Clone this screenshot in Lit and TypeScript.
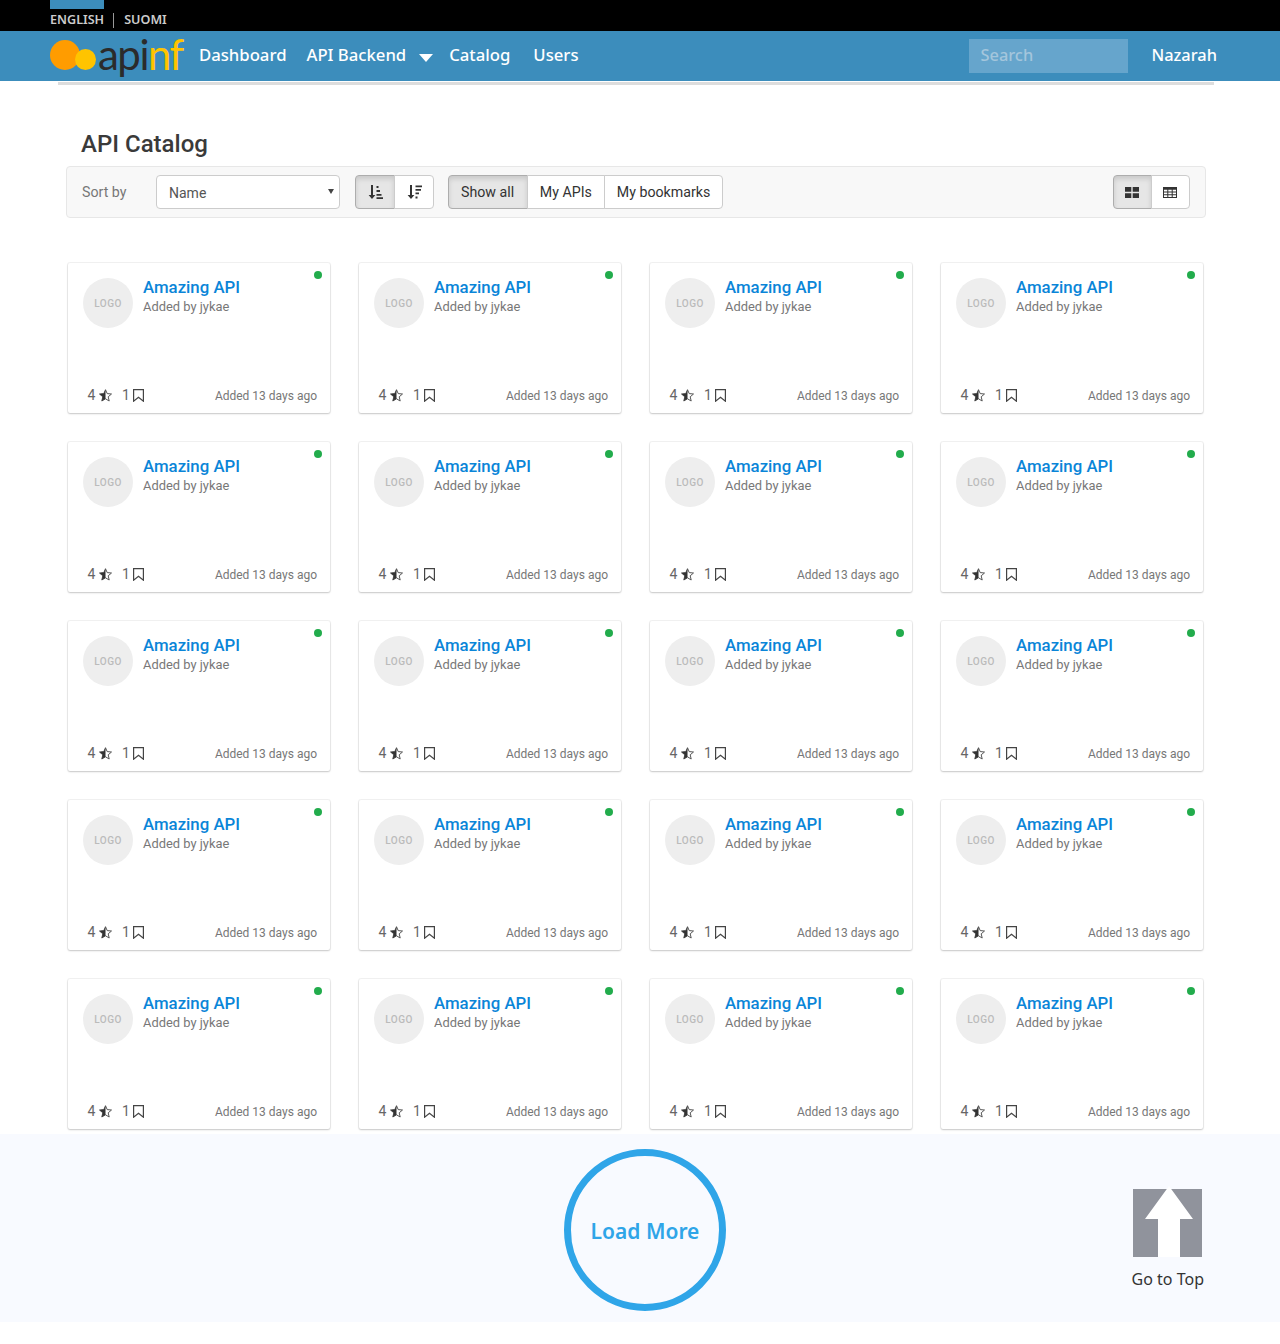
import { LitElement, html, css, svg } from 'lit';
import { customElement } from 'lit/decorators.js';

const sortAsc = html`<svg width="16" height="16" viewBox="0 0 16 16"><path d="M4 1h2v10h2.400L5 15 1.600 11H4z" fill="#333"/><path d="M9.500 2h2v2h-2zM9.500 6h3.500v2H9.500zM9.500 10h5v1.800h-5zM9.500 13.200h6.500V15H9.500z" fill="#333"/></svg>`;
const sortDesc = html`<svg width="16" height="16" viewBox="0 0 16 16"><path d="M4 1h2v10h2.400L5 15 1.600 11H4z" fill="#333"/><path d="M9.500 1.500H16v1.800H9.500zM9.500 5H15v1.800H9.500zM9.500 8.500h3.500v1.800H9.500zM9.500 12.500h2v2h-2z" fill="#333"/></svg>`;
const grid = html`<svg width="14" height="11" viewBox="0 0 14 12" preserveAspectRatio="none"><path d="M0 0h6.300v5.300H0zM7.700 0H14v5.300H7.700zM0 6.700h6.300V12H0zM7.700 6.700H14V12H7.700z" fill="#333"/></svg>`;
const table = html`<svg width="14" height="11" viewBox="0 0 14 12" preserveAspectRatio="none"><path d="M0 0h14v12H0z" fill="#333"/><path d="M1 3h3.300v2H1zM5.300 3h3.400v2H5.300zM9.700 3H13v2H9.700zM1 6h3.300v2H1zM5.300 6h3.400v2H5.300zM9.700 6H13v2H9.700zM1 9h3.300v2H1zM5.300 9h3.400v2H5.300zM9.700 9H13v2H9.700z" fill="#fff"/></svg>`;
const star = html`<svg width="13" height="13" viewBox="0.5 0.500 13 13"><path d="M7 1.200l1.700 3.900 4.300.4-3.300 2.800 1 4.200L7 10.300l-3.700 2.200 1-4.200L1 5.500l4.300-.4z" fill="#fff" stroke="#555" stroke-width="1"/><path d="M7 1.200v9.100l-3.700 2.200 1-4.200L1 5.500l4.300-.4z" fill="#333"/></svg>`;
const bookmark = html`<svg width="11" height="13" viewBox="0 0 11 13"><path d="M.6.600h9.800v11.600L5.500 8.300.6 12.200z" fill="none" stroke="#444" stroke-width="1.200"/></svg>`;
const arrow = svg`<path d="M0 3h69v68H0z" fill="#90939c"/><path d="M36 0l24 33H47v38H25V33H12z" fill="#fff"/>`;

@customElement('app-root')
export class AppRoot extends LitElement {
  static styles = css`
    :host {
      display: block;
      font-family: Roboto, sans-serif;
      color: #333;
      background: #fff;
    }
    .lang {
      height: 31px;
      background: #000;
      padding-left: 50px;
      box-sizing: border-box;
      font: 600 12.6px/1 "Noto Sans", sans-serif;
      color: #ccc;
    }
    .lang-inner {
      display: flex;
      flex-direction: column;
    }
    .lang-tab {
      width: 54px;
      height: 9px;
      background: #3c8dbc;
      margin-bottom: 4px;
    }
    .lang-row {
      display: flex;
      align-items: center;
      height: 14px;
    }
    .lang-row i {
      width: 1px;
      height: 15px;
      background: #999;
      margin: 0 10px 0 9px;
    }
    .nav {
      height: 50px;
      background: #3c8dbc;
      display: flex;
      align-items: center;
      padding-left: 50px;
      font: 500 16.4px "Noto Sans", sans-serif;
      color: #fff;
    }
    .logo {
      display: flex;
      align-items: center;
      width: 149px;
      position: relative;
    }
    .logo-text {
      font: 400 42px/50px Lato, sans-serif;
      letter-spacing: -1.5px;
      color: #2b2b2b;
      margin-left: 48px;
      margin-top: -4px;
    }
    .logo-text span { color: #ffc400; }
    .dot-a, .dot-b {
      position: absolute;
      border-radius: 50%;
    }
    .dot-a { left: 0; top: 7px; width: 30px; height: 30px; background: #ff9c00; }
    .dot-b { left: 25px; top: 16px; width: 21px; height: 21px; background: #ffc400; }
    .nav a { white-space: nowrap; padding-bottom: 4px; font-size: 16.7px; }
    .nav a.backend { margin-left: 20px; }
    .nav a.users { margin-left: 23px; }
    .caret {
      width: 0;
      height: 0;
      border-left: 7px solid transparent;
      border-right: 7px solid transparent;
      border-top: 8px solid #fff;
      margin: 4px 16px 0 13px;
    }
    .search {
      margin-left: auto;
      width: 159px;
      height: 34px;
      background: #66a5cc;
      color: #a4c6dc;
      line-height: 32px;
      padding-left: 11px;
      box-sizing: border-box;
    }
    .user {
      margin: 0 63px 0 23px;
      padding-bottom: 4px;
    }
    .rule {
      height: 3px;
      background: #ddd;
      margin: 1px 66px 0 58px;
    }
    h1 {
      font: 500 24px/28px Roboto, sans-serif;
      color: #3a3a3a;
      margin: 45px 0 8px 81px;
    }
    .toolbar {
      margin: 0 74px 0 66px;
      height: 52px;
      box-sizing: border-box;
      background: #f8f8f8;
      border: 1px solid #e7e7e7;
      border-radius: 4px;
      display: flex;
      align-items: center;
      padding: 0 15px;
      font-size: 14.2px;
    }
    .sort-label {
      color: #777;
      width: 74px;
    }
    .select {
      position: relative;
      margin-right: 15px;
    }
    .select::after {
      content: "";
      position: absolute;
      right: 6px;
      top: 14px;
      border-left: 3px solid transparent;
      border-right: 3px solid transparent;
      border-top: 5px solid #444;
    }
    select {
      display: block;
      appearance: none;
      width: 184px;
      height: 34px;
      border: 1px solid #ccc;
      border-radius: 4px;
      background: #fff;
      color: #555;
      font: 14px Roboto, sans-serif;
      padding: 2px 8px 0 12px;
    }
    .group { display: flex; }
    .group + .group { margin-left: 14px; }
    .group.end { margin-left: auto; }
    .btn {
      height: 34px;
      box-sizing: border-box;
      border: 1px solid #ccc;
      background: #fff;
      display: flex;
      align-items: center;
      justify-content: center;
      margin-left: -1px;
      color: #333;
    }
    .btn:first-child { border-radius: 4px 0 0 4px; margin-left: 0; }
    .btn:last-child { border-radius: 0 4px 4px 0; }
    .btn.on {
      background: #e6e6e6;
      border-color: #adadad;
      box-shadow: inset 0 3px 5px rgba(0, 0, 0, 0.125);
    }
    .btn.icon { width: 40px; }
    .end .btn.icon { width: 39px; padding-right: 1px; }
    .btn.text { padding: 0 12px; }
    .btn.text:first-child { padding-right: 12.7px; }
    .btn.text:last-child { padding-right: 11.5px; }
    .cards {
      display: grid;
      grid-template-columns: repeat(4, 262px);
      gap: 29px;
      padding: 45px 0 5px 68px;
    }
    .card {
      position: relative;
      height: 150px;
      box-sizing: border-box;
      background: #fff;
      border-radius: 2px;
      box-shadow: 0 1px 2px rgba(0, 0, 0, 0.18), 0 0 0 1px rgba(0, 0, 0, 0.05);
      padding: 14px 13px 0 15px;
      display: flex;
      flex-direction: column;
      justify-content: space-between;
    }
    .status {
      position: absolute;
      top: 8px;
      right: 8px;
      width: 8px;
      height: 8px;
      border-radius: 50%;
      background: #22ac4c;
    }
    .head { display: flex; gap: 10px; }
    .avatar {
      width: 50px;
      height: 50px;
      border-radius: 50%;
      background: #eee;
      color: #bbb;
      font-size: 10px;
      font-weight: 500;
      letter-spacing: 0.5px;
      display: flex;
      align-items: center;
      justify-content: center;
      margin-top: 1px;
    }
    .name {
      font: 500 16.8px/20px Roboto, sans-serif;
      color: #0a85d8;
      margin-bottom: 1px;
    }
    .by { font-size: 12.9px; line-height: 18px; color: #777; }
    .meta {
      display: flex;
      align-items: center;
      height: 18px;
      margin-bottom: 9px;
      padding-left: 4.500px;
      font-size: 14px;
      color: #666;
    }
    .meta svg { margin-left: 3.500px; }
    .meta .count { margin-left: 10px; }
    .age { margin-left: auto; padding-top: 2px; font-size: 12px; color: #777; }
    .footer {
      height: 188px;
      background: #f8faff;
      display: flex;
    }
    .more {
      width: 162px;
      height: 162px;
      box-sizing: border-box;
      border: 7px solid #2fa5e8;
      border-radius: 50%;
      margin: 15px 0 0 564px;
      padding-top: 2px;
      display: flex;
      align-items: center;
      justify-content: center;
      font: 600 21px "Noto Sans", sans-serif;
      color: #2fa5e8;
    }
    .top {
      margin: 52px 76px 0 auto;
      display: flex;
      flex-direction: column;
      align-items: center;
      font: 16px "Noto Sans", sans-serif;
      color: #333;
    }
    .top svg { margin-bottom: 11px; }
  `;

  private renderCard() {
    return html`
      <div class="card">
        <span class="status"></span>
        <div class="head">
          <div class="avatar">LOGO</div>
          <div>
            <div class="name">Amazing API</div>
            <div class="by">Added by jykae</div>
          </div>
        </div>
        <div class="meta">
          <span>4</span>${star}
          <span class="count">1</span>${bookmark}
          <span class="age">Added 13 days ago</span>
        </div>
      </div>
    `;
  }

  render() {
    return html`
      <div class="lang">
        <div class="lang-inner">
          <div class="lang-tab"></div>
          <div class="lang-row">ENGLISH<i></i>SUOMI</div>
        </div>
      </div>
      <nav class="nav">
        <div class="logo">
          <span class="dot-a"></span><span class="dot-b"></span>
          <span class="logo-text">api<span>nf</span></span>
        </div>
        <a>Dashboard</a>
        <a class="backend">API Backend</a>
        <span class="caret"></span>
        <a>Catalog</a>
        <a class="users">Users</a>
        <div class="search">Search</div>
        <div class="user">Nazarah</div>
      </nav>
      <div class="rule"></div>
      <h1>API Catalog</h1>
      <div class="toolbar">
        <span class="sort-label">Sort by</span>
        <div class="select"><select><option>Name</option></select></div>
        <div class="group">
          <div class="btn icon on">${sortAsc}</div>
          <div class="btn icon">${sortDesc}</div>
        </div>
        <div class="group">
          <div class="btn text on">Show all</div>
          <div class="btn text">My APIs</div>
          <div class="btn text">My bookmarks</div>
        </div>
        <div class="group end">
          <div class="btn icon on">${grid}</div>
          <div class="btn icon">${table}</div>
        </div>
      </div>
      <div class="cards">
        ${Array.from({ length: 20 }, () => this.renderCard())}
      </div>
      <div class="footer">
        <div class="more">Load More</div>
        <div class="top">
          <svg width="69" height="71" viewBox="0 0 69 71">${arrow}</svg>
          Go to Top
        </div>
      </div>
    `;
  }
}
